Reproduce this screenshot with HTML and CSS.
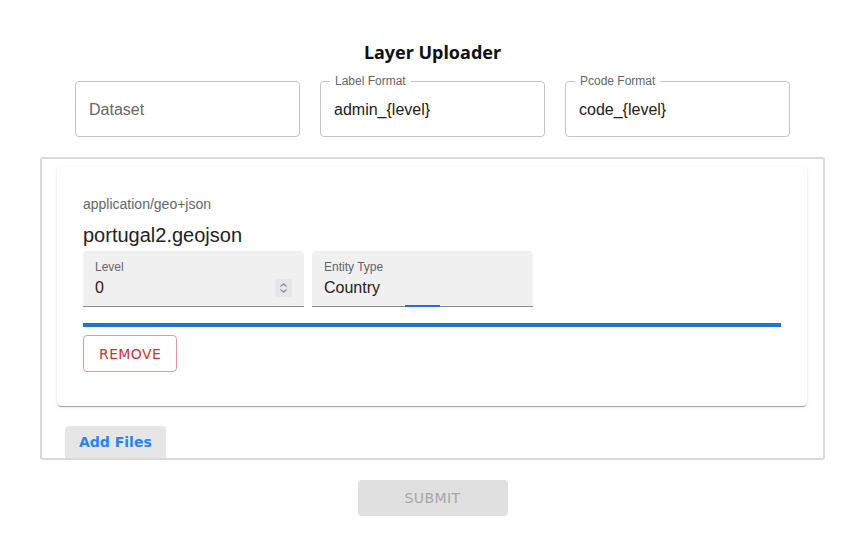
FILE: index.html
```html
<!DOCTYPE html>
<html>
<head>
<meta charset="utf-8">
<link rel="stylesheet" href="styles.css">
</head>
<body>
<div class="page">
  <h1 class="title">Layer Uploader</h1>
  <div class="fields">
    <div class="outlined"><span class="placeholder">Dataset</span></div>
    <div class="outlined has-label"><span class="notch-label">Label Format</span><span class="value">admin_{level}</span></div>
    <div class="outlined has-label"><span class="notch-label">Pcode Format</span><span class="value">code_{level}</span></div>
  </div>
  <div class="dropzone">
    <div class="card">
      <div class="mime">application/geo+json</div>
      <div class="filename">portugal2.geojson</div>
      <div class="filled-row">
        <div class="filled">
          <span class="filled-label">Level</span>
          <span class="filled-value">0</span>
          <span class="spinner">
            <svg width="17" height="18" viewBox="0 0 17 18"><path d="M5.5 7.5 L8.5 4.8 L11.5 7.5" fill="none" stroke="#8a8a8e" stroke-width="1.1"/><path d="M5.5 10.5 L8.5 13.2 L11.5 10.5" fill="none" stroke="#8a8a8e" stroke-width="1.1"/></svg>
          </span>
        </div>
        <div class="filled">
          <span class="filled-label entity">Entity Type</span>
          <span class="filled-value">Country</span>
          <span class="focus-seg"></span>
        </div>
      </div>
      <div class="progress"></div>
      <button class="remove">REMOVE</button>
    </div>
    <button class="add-files">Add Files</button>
  </div>
  <div class="submit-row">
    <button class="submit">SUBMIT</button>
  </div>
</div>
</body>
</html>
```

FILE: styles.css
```css
* { box-sizing: border-box; }
html, body { margin: 0; padding: 0; background: #fff; }
body { font-family: "Liberation Sans", Arial, sans-serif; color: #222; }

.page {
  width: 785px;
  margin-left: 40px;
  padding-top: 40px;
}

.title {
  margin: 0;
  text-align: center;
  font-family: "Noto Sans", sans-serif;
  font-weight: 700;
  font-size: 18px;
  line-height: 24px;
  color: #111;
}

.fields {
  display: flex;
  justify-content: center;
  gap: 20px;
  margin-top: 17px;
}

.outlined {
  position: relative;
  width: 225px;
  height: 56px;
  border: 1px solid #c4c4c4;
  border-radius: 4px;
  display: flex;
  align-items: center;
  padding: 2px 13px 0 13px;
  font-size: 16px;
}

.placeholder { color: #666; }
.value { color: #222; }

.notch-label {
  position: absolute;
  left: 9px;
  top: -8px;
  padding: 0 5px;
  background: #fff;
  font-size: 12px;
  line-height: 14px;
  color: #666;
}

.dropzone {
  margin-top: 20px;
  border: 2px solid #d9d9d9;
  border-radius: 3px;
  padding: 8px 16px 0 15px;
}

.card {
  background: #fff;
  border-radius: 4px;
  box-shadow: 0 2px 1px -1px rgba(0,0,0,0.2), 0 1px 1px 0 rgba(0,0,0,0.14), 0 1px 3px 0 rgba(0,0,0,0.12);
  padding: 27px 26px 34px 26px;
}

.mime {
  font-size: 14px;
  line-height: 20px;
  color: #666;
}

.filename {
  margin-top: 9px;
  margin-bottom: 4px;
  font-size: 20px;
  line-height: 24px;
  color: #222;
}

.filled-row {
  display: flex;
  gap: 8px;
}

.filled {
  position: relative;
  width: 221px;
  height: 56px;
  background: #f0f0f0;
  border-radius: 4px 4px 0 0;
  border-bottom: 1px solid #8c8c8c;
  padding: 8px 12px 0 12px;
  display: flex;
  flex-direction: column;
}

.filled-label {
  font-size: 12px;
  line-height: 16px;
  color: #666;
}
.filled-label.entity { color: #5d6573; }

.filled-value {
  margin-top: 3px;
  font-size: 16px;
  line-height: 19px;
  color: #222;
}

.spinner {
  position: absolute;
  left: 192px;
  top: 28px;
  width: 17px;
  height: 18px;
  background: #e6e6ea;
  display: block;
}
.spinner svg { display: block; }

.focus-seg {
  position: absolute;
  left: 93px;
  bottom: -1px;
  width: 35px;
  height: 2px;
  background: #1976d2;
}

.progress {
  margin-top: 16px;
  height: 4px;
  background: #1976d2;
}

button { font-family: "DejaVu Sans", sans-serif; cursor: pointer; }

.remove {
  margin-top: 8px;
  height: 37px;
  padding: 0 15px;
  background: #fff;
  border: 1px solid #e49a9a;
  border-radius: 4px;
  color: #d32f2f;
  font-size: 14px;
  letter-spacing: 0.4px;
  display: block;
}

.add-files {
  display: block;
  margin: 20px 0 0 8px;
  height: 32px;
  padding: 0 14px;
  border: none;
  border-radius: 4px 4px 0 0;
  background: #e6e6e6;
  color: #2684ff;
  font-weight: 700;
  font-size: 14px;
}

.submit-row {
  display: flex;
  justify-content: center;
  margin-top: 20px;
}

.submit {
  width: 150px;
  height: 36px;
  border: none;
  border-radius: 4px;
  background: #e0e0e0;
  color: #a6a6a6;
  font-size: 14px;
  letter-spacing: 0.4px;
}
```
